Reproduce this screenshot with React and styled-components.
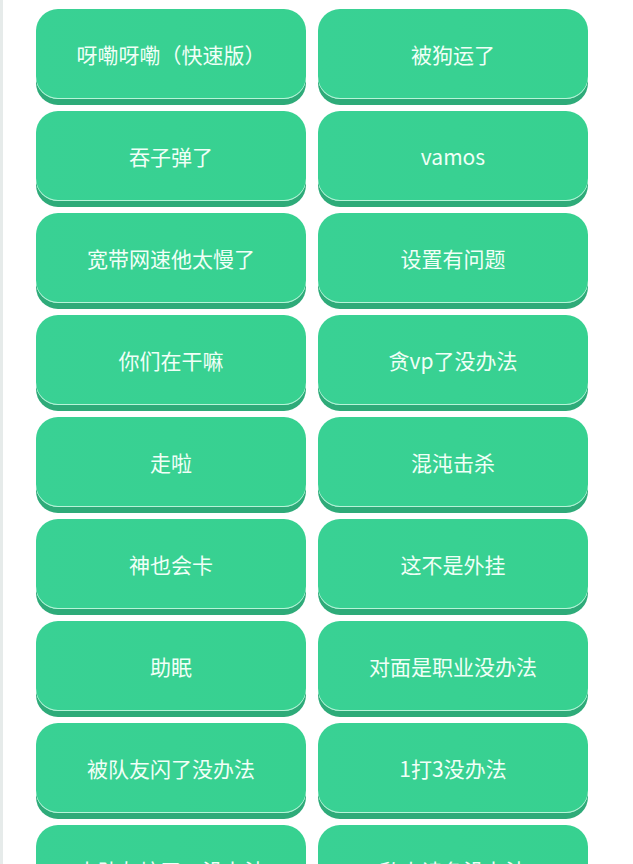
import React from "react";
import styled, { createGlobalStyle } from "styled-components";

const GlobalStyle = createGlobalStyle`
  html, body {
    margin: 0;
    padding: 0;
    background: #fff;
    font-family: "Noto Sans CJK SC", "Noto Sans", sans-serif;
  }
`;

const Page = styled.div`
  min-height: 864px;
  border-left: 3px solid #e6ebea;
  padding: 9px 0 0 33px;
  box-sizing: border-box;
`;

const Grid = styled.div`
  display: grid;
  grid-template-columns: repeat(2, 270px);
  column-gap: 12px;
  row-gap: 12px;
`;

const SoundButton = styled.button`
  height: 90px;
  border: none;
  border-radius: 22px;
  background: linear-gradient(90deg, #39d194 0%, #37d190 100%);
  box-shadow: 0 6px 0 #2eab79, inset 0 -1px 0 rgba(225, 255, 240, 0.75);
  color: #f0fff7;
  font-family: "Noto Sans CJK SC", "Noto Sans", sans-serif;
  font-size: 21px;
  cursor: pointer;
  padding: 0;
`;

const sounds = [
  "呀嘞呀嘞（快速版）",
  "被狗运了",
  "吞子弹了",
  "vamos",
  "宽带网速他太慢了",
  "设置有问题",
  "你们在干嘛",
  "贪vp了没办法",
  "走啦",
  "混沌击杀",
  "神也会卡",
  "这不是外挂",
  "助眠",
  "对面是职业没办法",
  "被队友闪了没办法",
  "1打3没办法",
  "大队友坑了，没办法",
  "私人读条没办法",
];

export default function App() {
  return (
    <>
      <GlobalStyle />
      <Page>
        <Grid>
          {sounds.map((s) => (
            <SoundButton key={s}>{s}</SoundButton>
          ))}
        </Grid>
      </Page>
    </>
  );
}
